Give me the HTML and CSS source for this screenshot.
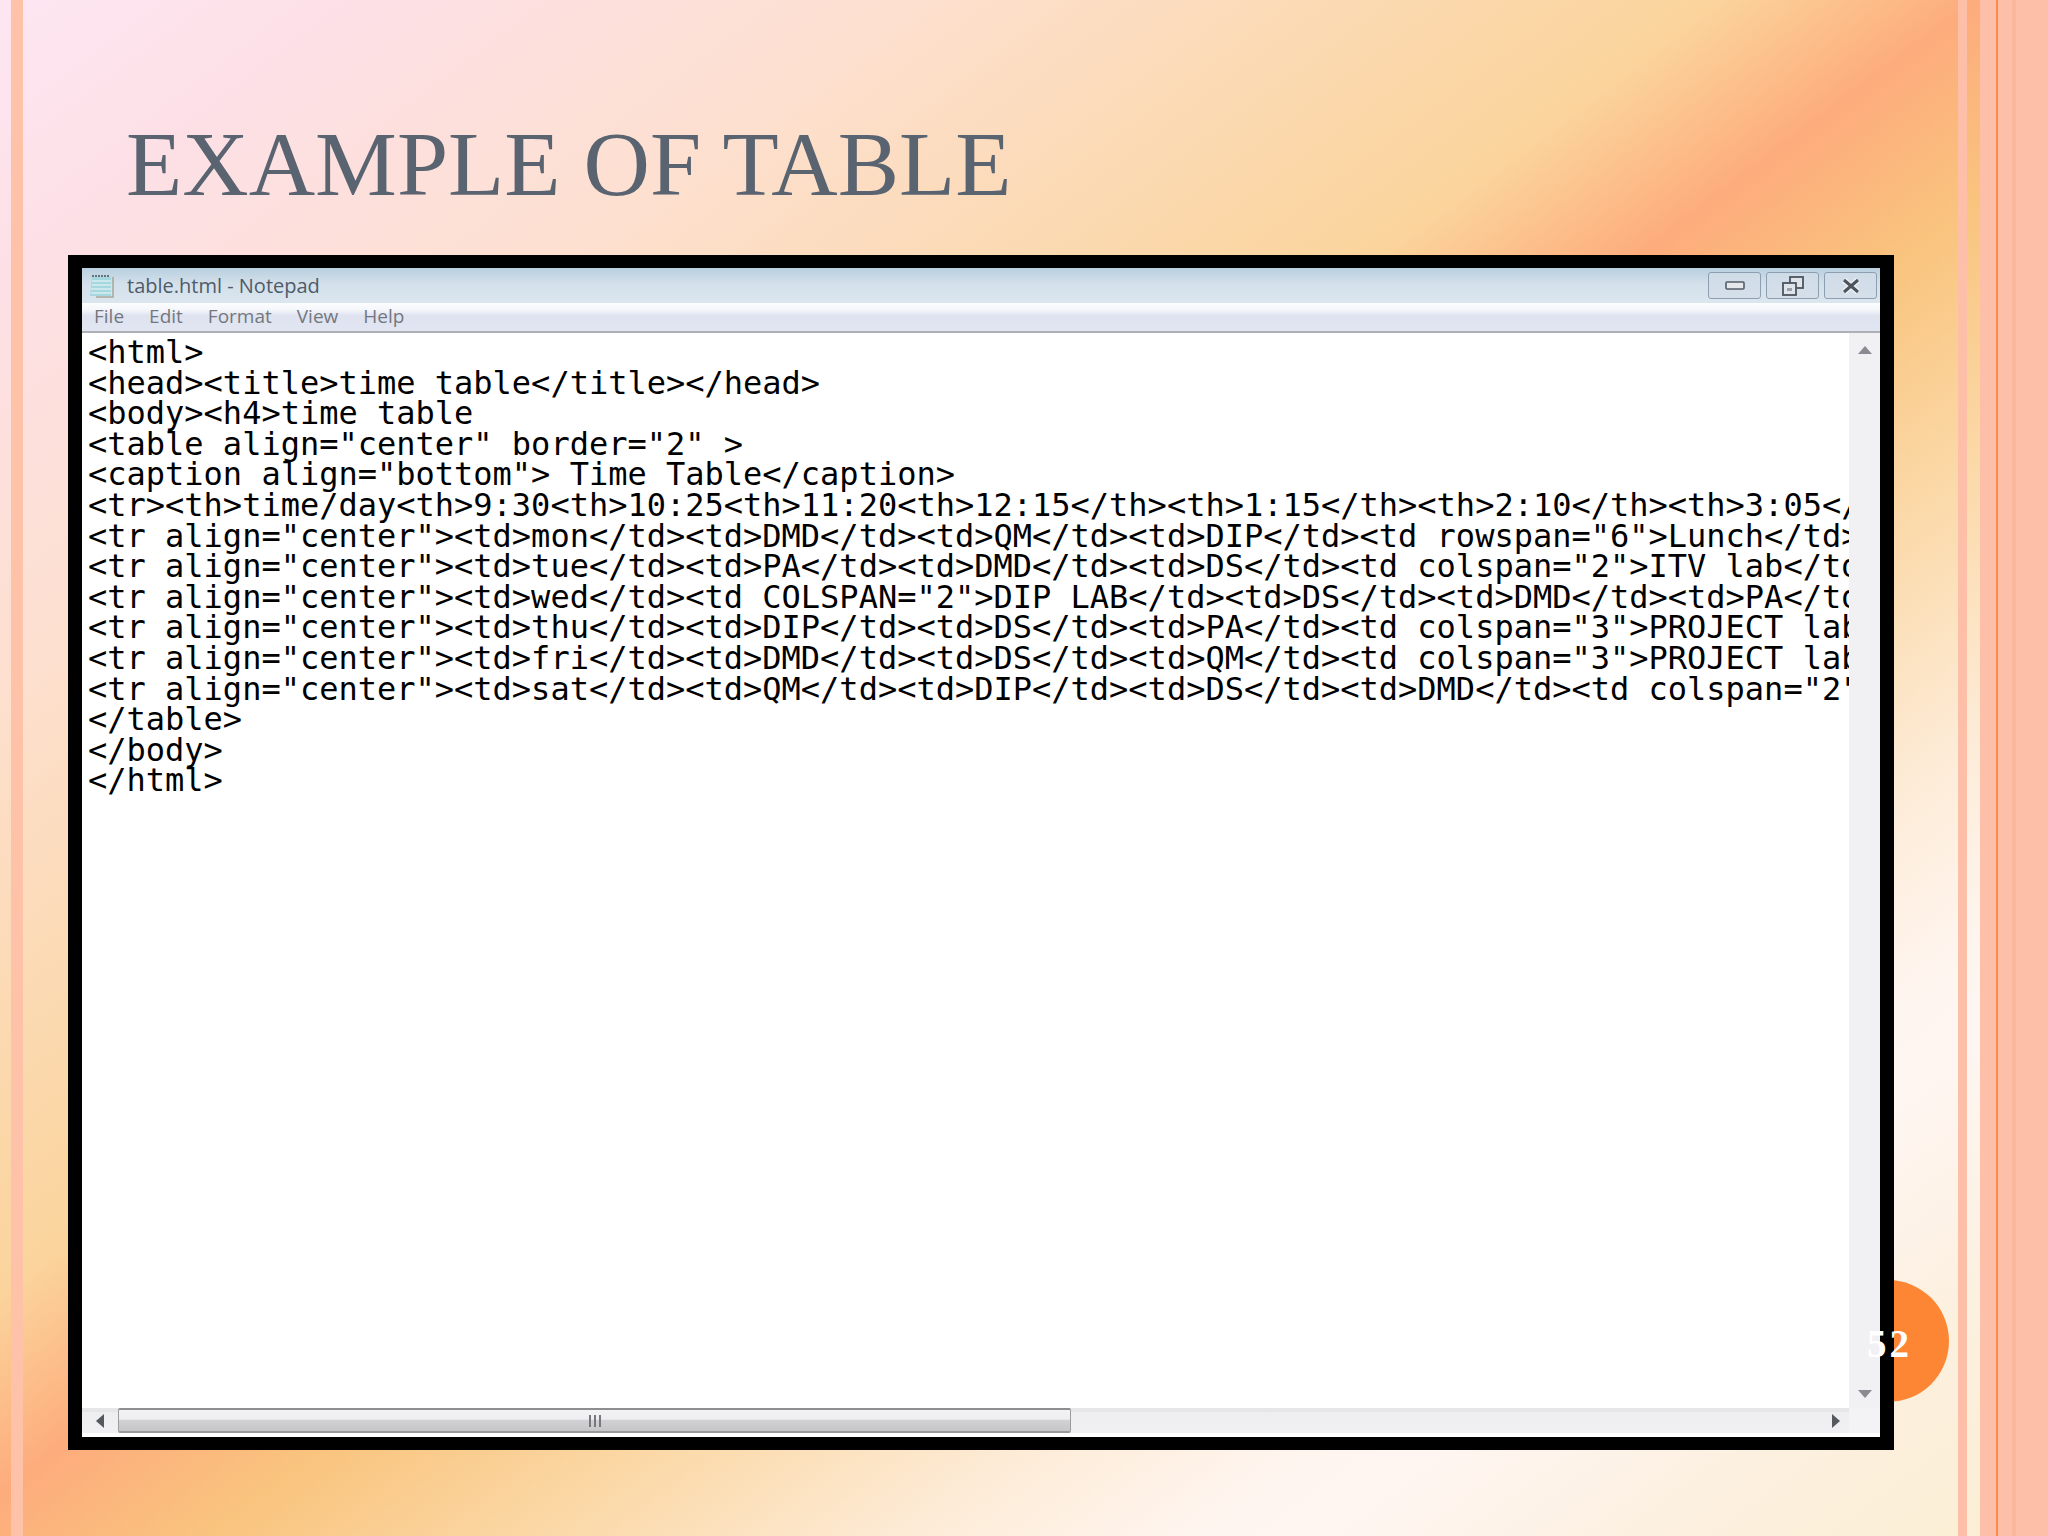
FILE: index.html
```html
<!DOCTYPE html>
<html lang="en">
<head>
<meta charset="utf-8">
<title>Example of table</title>
<link rel="stylesheet" href="styles.css">
</head>
<body>
<main class="slide">
  <h1 class="slide-title">EXAMPLE OF TABLE</h1>
  <div class="page-badge"></div>
  <section class="notepad">
    <header class="titlebar">
      <svg class="app-icon" width="26" height="28" viewBox="0 0 26 28">
        <path d="M24 5 V25 H7" fill="none" stroke="#a8a69a" stroke-width="1.5"/>
        <path d="M3 5 H22 V24 H1 Z" fill="#a6d6df"/>
        <path d="M3 9 H22 M3 13 H22 M2 17 H22 M2 21 H22" stroke="#d8eef2" stroke-width="1.5"/>
        <path d="M4 3 V5 M7 3 V5 M10 3 V5 M13 3 V5 M16 3 V5 M19 3 V5" stroke="#4d5a60" stroke-width="1.6"/>
      </svg>
      <span class="window-title">table.html - Notepad</span>
      <div class="window-buttons">
        <div class="win-btn">
          <svg width="20" height="10" viewBox="0 0 20 10"><rect x="1" y="1" width="18" height="7" rx="1" fill="#e6e8ec" stroke="#545c66" stroke-width="1.6"/></svg>
        </div>
        <div class="win-btn">
          <svg width="22" height="20" viewBox="0 0 22 20"><rect x="8" y="1" width="13" height="11" fill="#dfe4ea" stroke="#4c545e" stroke-width="1.8"/><rect x="1" y="7" width="13" height="12" fill="#dfe4ea" stroke="#4c545e" stroke-width="1.8"/><rect x="5" y="12" width="5" height="3" fill="#9aa2ac"/></svg>
        </div>
        <div class="win-btn">
          <svg width="20" height="16" viewBox="0 0 20 16"><path d="M3 2 L17 14 M17 2 L3 14" stroke="#eef0f3" stroke-width="6"/><path d="M3 2 L17 14 M17 2 L3 14" stroke="#4c545e" stroke-width="3"/></svg>
        </div>
      </div>
    </header>
    <nav class="menubar">
      <span class="menu-item">File</span>
      <span class="menu-item">Edit</span>
      <span class="menu-item">Format</span>
      <span class="menu-item">View</span>
      <span class="menu-item">Help</span>
    </nav>
    <div class="editor-row">
      <pre class="editor">&lt;html&gt;
&lt;head&gt;&lt;title&gt;time table&lt;/title&gt;&lt;/head&gt;
&lt;body&gt;&lt;h4&gt;time table
&lt;table align="center" border="2" &gt;
&lt;caption align="bottom"&gt; Time Table&lt;/caption&gt;
&lt;tr&gt;&lt;th&gt;time/day&lt;th&gt;9:30&lt;th&gt;10:25&lt;th&gt;11:20&lt;th&gt;12:15&lt;/th&gt;&lt;th&gt;1:15&lt;/th&gt;&lt;th&gt;2:10&lt;/th&gt;&lt;th&gt;3:05&lt;/th&gt;&lt;/tr&gt;
&lt;tr align="center"&gt;&lt;td&gt;mon&lt;/td&gt;&lt;td&gt;DMD&lt;/td&gt;&lt;td&gt;QM&lt;/td&gt;&lt;td&gt;DIP&lt;/td&gt;&lt;td rowspan="6"&gt;Lunch&lt;/td&gt;
&lt;tr align="center"&gt;&lt;td&gt;tue&lt;/td&gt;&lt;td&gt;PA&lt;/td&gt;&lt;td&gt;DMD&lt;/td&gt;&lt;td&gt;DS&lt;/td&gt;&lt;td colspan="2"&gt;ITV lab&lt;/td&gt;
&lt;tr align="center"&gt;&lt;td&gt;wed&lt;/td&gt;&lt;td COLSPAN="2"&gt;DIP LAB&lt;/td&gt;&lt;td&gt;DS&lt;/td&gt;&lt;td&gt;DMD&lt;/td&gt;&lt;td&gt;PA&lt;/td&gt;
&lt;tr align="center"&gt;&lt;td&gt;thu&lt;/td&gt;&lt;td&gt;DIP&lt;/td&gt;&lt;td&gt;DS&lt;/td&gt;&lt;td&gt;PA&lt;/td&gt;&lt;td colspan="3"&gt;PROJECT lab
&lt;tr align="center"&gt;&lt;td&gt;fri&lt;/td&gt;&lt;td&gt;DMD&lt;/td&gt;&lt;td&gt;DS&lt;/td&gt;&lt;td&gt;QM&lt;/td&gt;&lt;td colspan="3"&gt;PROJECT lab
&lt;tr align="center"&gt;&lt;td&gt;sat&lt;/td&gt;&lt;td&gt;QM&lt;/td&gt;&lt;td&gt;DIP&lt;/td&gt;&lt;td&gt;DS&lt;/td&gt;&lt;td&gt;DMD&lt;/td&gt;&lt;td colspan="2"
&lt;/table&gt;
&lt;/body&gt;
&lt;/html&gt;</pre>
      <div class="vscroll">
        <svg width="14" height="8" viewBox="0 0 14 8"><path d="M7 0 L14 8 H0 Z" fill="#8a8a90"/></svg>
        <svg width="14" height="8" viewBox="0 0 14 8"><path d="M0 0 H14 L7 8 Z" fill="#8a8a90"/></svg>
      </div>
    </div>
    <div class="hscroll-row">
      <div class="hscroll">
        <svg class="arrow-left" width="8" height="14" viewBox="0 0 8 14"><path d="M8 0 V14 L0 7 Z" fill="#55585e"/></svg>
        <div class="thumb">
          <svg width="14" height="14" viewBox="0 0 14 14"><path d="M2 1 V13 M7 1 V13 M12 1 V13" stroke="#77787c" stroke-width="2"/></svg>
        </div>
        <svg class="arrow-right" width="8" height="14" viewBox="0 0 8 14"><path d="M0 0 V14 L8 7 Z" fill="#55585e"/></svg>
      </div>
      <div class="corner"></div>
    </div>
  </section>
  <span class="page-number">52</span>
</main>
</body>
</html>
```
FILE: styles.css
```css
* { box-sizing: border-box; }
html, body { margin: 0; padding: 0; }
body { width: 2048px; height: 1536px; overflow: hidden; }

.slide {
  position: relative;
  width: 2048px;
  height: 1536px;
  padding: 255px 154px 86px 68px;
  background-color: #fff;
  background-repeat: no-repeat;
  background-image:
    linear-gradient(#fdc2a8, #fdc2a8),
    linear-gradient(#fdbfa8, #fdbfa8),
    linear-gradient(#fdbfa8, #fdbfa8),
    linear-gradient(#fb8a4e, #fb8a4e),
    linear-gradient(#fdbfa8, #fdbfa8),
    linear-gradient(#fcb69c, #fcb69c),
    linear-gradient(#fdbfa8, #fdbfa8),
    linear-gradient(143deg,
      #fde6f2 0%, #fde0e6 9%, #fde0d0 22%, #fbd9b0 34%, #fbd49c 42%,
      #fdac7c 48.5%, #f9c47e 55%, #fbd8a6 63%, #fdebd6 72%,
      #fff5ef 79%, #fff6f2 82%, #fcf0e0 90%, #fbeed2 100%);
  background-size:
    12px 100%, 9px 100%, 16px 100%, 2px 100%, 14px 100%, 4px 100%, 32px 100%, 100% 100%;
  background-position:
    11px 0, 1958px 0, 1980px 0, 1996px 0, 1998px 0, 2012px 0, 2016px 0, 0 0;
}

.slide-title {
  position: absolute;
  left: 126px;
  top: 111px;
  margin: 0;
  font-family: "Liberation Serif", serif;
  font-weight: 400;
  font-size: 92px;
  line-height: 106px;
  color: #5a6370;
  white-space: nowrap;
}

.page-badge {
  position: absolute;
  left: 1827px;
  top: 1280px;
  width: 122px;
  height: 122px;
  border-radius: 50%;
  background: #fd8635;
}

.page-number {
  position: absolute;
  left: 1867px;
  top: 1322px;
  font-family: "Liberation Serif", serif;
  font-weight: 700;
  font-size: 39px;
  line-height: 44px;
  letter-spacing: 3px;
  color: #fff;
}

.notepad {
  position: relative;
  display: flex;
  flex-direction: column;
  width: 1826px;
  height: 1195px;
  border: solid #000;
  border-width: 13px 14px;
  background: #fff;
}

.titlebar {
  display: flex;
  align-items: center;
  flex: 0 0 35px;
  padding: 0 3px 0 7px;
  background: linear-gradient(180deg, #b9cfdf 0%, #d3e0ea 45%, #dbe6ef 100%);
}
.app-icon { flex: none; }
.window-title {
  margin-left: 12px;
  font-family: "Open Sans", sans-serif;
  font-size: 20px;
  color: #4e5b6a;
}
.window-buttons {
  display: flex;
  gap: 5px;
  margin-left: auto;
}
.win-btn {
  display: flex;
  align-items: center;
  justify-content: center;
  width: 53px;
  height: 27px;
  border: 1px solid #8d9eb0;
  border-radius: 3px;
  background: linear-gradient(180deg, #cfdce8, #d5dfea);
}

.menubar {
  display: flex;
  align-items: center;
  gap: 25px;
  flex: 0 0 30px;
  padding: 0 0 2px 12px;
  border-bottom: 2px solid #aeb0b8;
  background: linear-gradient(180deg, #fbfdfe 0%, #f4f6fb 25%, #dfe3f0 45%, #e2e6f2 100%);
}
.menu-item {
  font-family: "Open Sans", sans-serif;
  font-size: 19px;
  color: #73787f;
}

.editor-row {
  display: flex;
  flex: 1;
  min-height: 0;
}
.editor {
  flex: 1;
  min-width: 0;
  margin: 0;
  padding: 4px 3px 0 6px;
  overflow: hidden;
  font-family: "DejaVu Sans Mono", monospace;
  font-size: 32px;
  line-height: 30.6px;
  color: #000;
  white-space: pre;
  background: #fff;
}
.vscroll {
  display: flex;
  flex-direction: column;
  align-items: center;
  justify-content: space-between;
  flex: 0 0 31px;
  padding: 13px 0 10px;
  background: #f1f1f4;
}

.hscroll-row {
  display: flex;
  flex: 0 0 29px;
  background: #fff;
}
.hscroll {
  display: flex;
  align-items: center;
  flex: 1;
  height: 25px;
  background: linear-gradient(180deg, #e6e6e9 0%, #e6e6e9 16%, #eeeef1 17%, #f0f0f3 100%);
}
.arrow-left { margin: 0 14px 0 14px; }
.thumb {
  display: flex;
  align-items: center;
  justify-content: center;
  width: 1000px;
  height: 25px;
  border: 1px solid #9c9c9f;
  border-top: 2px solid #8e8e90;
  border-bottom: 2px solid #9a9a9c;
  border-radius: 2px;
  background: linear-gradient(180deg, #f3f3f5 0%, #eeeef0 45%, #d2d2d5 46%, #c6c6c9 100%);
}
.thumb { width: 953px; }
.arrow-right { margin-left: auto; margin-right: 9px; }
.corner {
  flex: 0 0 31px;
  height: 25px;
  background: #f3f3f6;
}
```
